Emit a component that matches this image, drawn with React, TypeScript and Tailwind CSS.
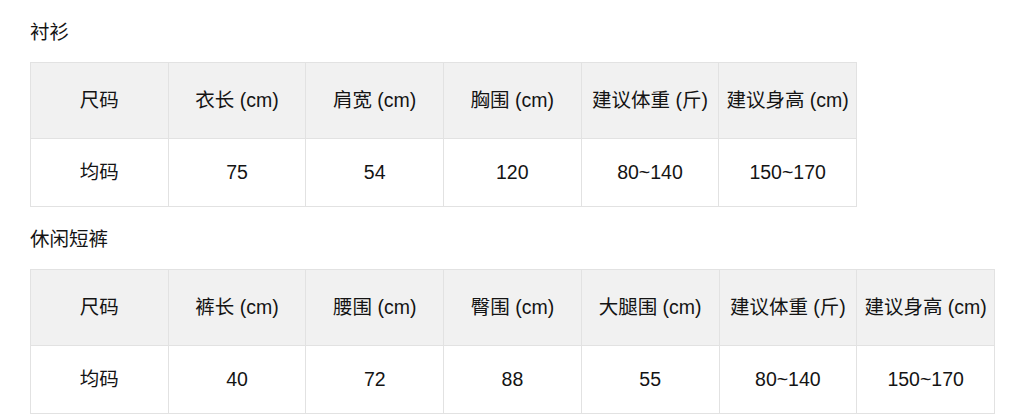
const FONT = { fontFamily: '"Liberation Sans", "Noto Sans CJK SC", sans-serif' }

type Table = { title: string; headers: string[]; row: string[]; width: string; titleTop: string }

const TABLES: Table[] = [
  {
    title: '衬衫',
    headers: ['尺码', '衣长 (cm)', '肩宽 (cm)', '胸围 (cm)', '建议体重 (斤)', '建议身高 (cm)'],
    row: ['均码', '75', '54', '120', '80~140', '150~170'],
    width: 'w-[827px]',
    titleTop: 'pt-[20px]',
  },
  {
    title: '休闲短裤',
    headers: ['尺码', '裤长 (cm)', '腰围 (cm)', '臀围 (cm)', '大腿围 (cm)', '建议体重 (斤)', '建议身高 (cm)'],
    row: ['均码', '40', '72', '88', '55', '80~140', '150~170'],
    width: 'w-[965px]',
    titleTop: 'pt-[20px]',
  },
]

export default function App() {
  return (
    <div className="w-[1024px] h-[414px] overflow-hidden bg-white pl-[30px] text-[#141414]" style={FONT}>
      {TABLES.map((t) => (
        <div key={t.title}>
          <h3 className={`${t.titleTop} pb-[18px] text-[19.5px] leading-[24px]`}>{t.title}</h3>
          <table className={`${t.width} table-fixed border-collapse text-[19.5px]`}>
            <thead>
              <tr className="h-[76px] bg-[#f1f1f1]">
                {t.headers.map((h) => (
                  <th key={h} className="border border-[#e2e2e2] font-normal text-center whitespace-nowrap">{h}</th>
                ))}
              </tr>
            </thead>
            <tbody>
              <tr className="h-[68px]">
                {t.row.map((c, i) => (
                  <td key={i} className="border border-[#e2e2e2] text-center">{c}</td>
                ))}
              </tr>
            </tbody>
          </table>
        </div>
      ))}
    </div>
  )
}
